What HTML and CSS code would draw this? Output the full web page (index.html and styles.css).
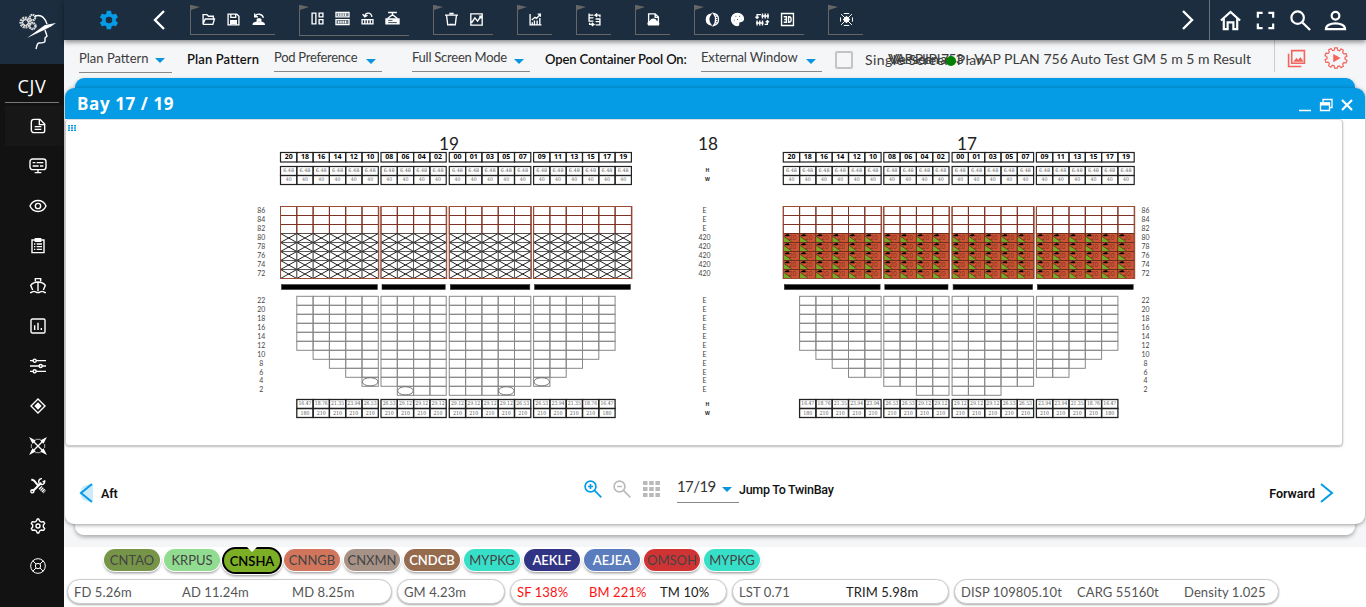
FILE: index.html
```html
<!DOCTYPE html>
<html lang="en">
<head>
<meta charset="utf-8">
<title>Bay Plan</title>
<link rel="stylesheet" href="styles.css">
</head>
<body>
<div class="app">
  <aside class="side">
    <div class="logo">
      <svg width="40" height="40" viewBox="0 0 40 40" fill="none" stroke="#fff">
        <circle cx="11.500" cy="11.500" r="4.300" stroke-width="3.600" stroke="#ccc" stroke-dasharray="1.8 .6"/><circle cx="11.500" cy="11.500" r="2.800"/>
        <circle cx="18.500" cy="6.500" r="2.700" stroke-width="2.200" stroke="#ddd" stroke-dasharray="1.6 .5"/><circle cx="18.500" cy="15" r="3" stroke-width="2.400" stroke="#ddd" stroke-dasharray="1.6 .5"/>
        <path d="M21 5c6-2 10 2 12 8M31 19l2 6-2 2v3c0 2-3 2-6 2-2 0-2 3-3 6" stroke-width="1.400"/>
        <path d="M13 27L31 14l11-2-5 3.500-8 4z" fill="#fff" stroke="none"/>
      </svg>
    </div>
    <div class="code">CJV</div>
    <nav class="menu">
      <a class="on"><svg viewBox="0 0 24 24"><path d="M6 2h9l7 7v10a3 3 0 0 1-3 3H6a4 4 0 0 1-4-4V6a4 4 0 0 1 4-4zM14 2v8h8M7 13h10M7 17h10"/></svg></a>
      <a><svg viewBox="0 0 24 24"><rect x="0" y="1.500" width="24" height="16" rx="4"/><path d="M4 7h4M10 7h10M4 12h9M15 12h5M12 18v4M7 22h10"/></svg></a>
      <a><svg viewBox="0 0 24 24"><path d="M0 12C5 1 19 1 24 12 19 23 5 23 0 12z"/><circle cx="12" cy="12" r="4"/></svg></a>
      <a><svg viewBox="0 0 24 24"><path d="M3 3h18v19H3zM8 1h8v4H8zM6 9h2M10 9h8M6 13h2M10 13h8M6 17h2M10 17h8"/></svg></a>
      <a><svg viewBox="0 0 24 24"><path d="M8 5V1h8v4M4 18L1 11C4 7 8 6 12 6s8 1 11 5l-3 7M12 6v14M0 22c3 0 4-2 6-2s3 2 6 2 4-2 6-2 3 2 6 2"/></svg></a>
      <a><svg viewBox="0 0 24 24"><rect x="1.500" y="1.500" width="21" height="21" rx="2"/><path d="M7 11v7M12 7v11M17 15v3"/></svg></a>
      <a><svg viewBox="0 0 24 24"><path d="M0 4h5M9 4h15M0 12h14M18 12h6M0 20h5M9 20h15"/><circle cx="7" cy="4" r="2.300"/><circle cx="16" cy="12" r="2.300"/><circle cx="7" cy="20" r="2.300"/></svg></a>
      <a><svg viewBox="0 0 24 24"><path d="M12 1.500L22.500 12 12 22.500 1.500 12z"/><path d="M12 8l4 4-4 4-4-4z" fill="#fff"/></svg></a>
      <a><svg viewBox="0 0 24 24"><path d="M3 3l18 18M21 3L3 21"/><path d="M1 1l6 3-3 3zM23 1l-6 3 3 3zM1 23l6-3-3-3zM23 23l-6-3 3-3z" fill="#fff"/><path d="M8 2h8M8 22h8M2 9v6M22 9v6" stroke-width="1"/></svg></a>
      <a><svg viewBox="0 0 24 24"><path d="M2 2l4 2 6 7" stroke-width="3"/><path d="M15 14l7 7" stroke-width="6" stroke-dasharray="2 1"/><path d="M4 20L17 7" stroke-width="3.200"/><circle cx="3.500" cy="20" r="2.300"/><path d="M22 5a4.500 4.500 0 1 1-4-4M23 4l-4 2"/></svg></a>
      <a><svg viewBox="0 0 24 24"><path d="M9.500 4.500L11 1.500h2l1.500 3 2.500 1.500 3.500-.5 1.500 2.500-2 2.500v3l2 2.500-1.500 2.500-3.500-.5-2.500 1.500-1.500 3h-2l-1.500-3L7 18l-3.500.5L2 16l2-2.500v-3L2 8l1.500-2.500L7 6z"/><circle cx="12" cy="12" r="3"/></svg></a>
      <a><svg viewBox="0 0 24 24" class="thin"><circle cx="12" cy="12" r="11"/><circle cx="12" cy="12" r="4"/><path d="M4 4l5 5M20 4l-5 5M4 20l5-5M20 20l-5-5"/></svg></a>
    </nav>
  </aside>
  <main class="main">
    <header class="top">
      <svg class="gear" viewBox="0 0 24 24"><path fill="#059be5" fill-rule="evenodd" d="M19.400 13c.1-.6.1-1.300 0-2l2.100-1.600c.2-.2.3-.4.100-.7l-2-3.400c-.1-.2-.4-.3-.6-.2l-2.500 1c-.5-.4-1.100-.7-1.700-1L14.400 2.400c0-.2-.2-.4-.5-.4h-4c-.2 0-.4.2-.5.400L9 5.100c-.6.2-1.200.6-1.700 1l-2.500-1c-.2-.1-.5 0-.6.200l-2 3.400c-.1.300 0 .5.100.7L4.500 11v2l-2.200 1.600c-.1.200-.2.400-.1.700l2 3.400c.1.200.4.300.6.200l2.500-1c.5.400 1.100.8 1.700 1l.4 2.700c.1.200.3.400.5.400h4c.3 0 .5-.2.500-.4l.4-2.700c.6-.2 1.200-.6 1.700-1l2.500 1c.2.100.5 0 .6-.2l2-3.400c.2-.3.1-.5-.1-.7zM12 15.600a3.600 3.600 0 1 1 0-7.200 3.600 3.600 0 0 1 0 7.200z"/></svg>
      <svg class="back" viewBox="0 0 12 20"><path d="M11 1L2 10l9 9"/></svg>
      <div class="groups">
        <div class="grp"><svg viewBox="0 0 24 24"><path d="M2 20V3h7l3 3h9v4M2 20L6 11h17l-3 10H3z"/></svg><svg viewBox="0 0 24 24"><path d="M2 2h16l4 4v16H2zM7 3v5h9V3M7 21v-7h10v7"/><path d="M7 14h10v5H7z" fill="#fff"/></svg><svg viewBox="0 0 24 24"><path d="M6 6c3-6 13-5 15 3M5 1v6h6"/><path d="M8 13c1-5 9-5 10 0l-2 3h-6zM1 22c0-6 5-4 7-7l5 2 5-2c2 3 6 1 6 7z" fill="#fff" stroke="none"/></svg></div>
        <div class="grp low"><svg viewBox="0 0 24 24"><path d="M2 2h7v20H2zM15 2h7v7h-7zM15 14h7v8h-7z"/></svg><svg viewBox="0 0 24 24"><path d="M0 1h24v8H0zM0 14h24v9H0z"/><path d="M3 5h18M3 18.500h18" stroke-width="5" stroke-dasharray="2.400 1"/></svg><svg viewBox="0 0 24 24"><path d="M7 8c1-8 12-8 13 1M3 4l4 5 5-3M2 14h20v8H2zM7 14v8M12 14v8M17 14v8"/></svg><svg viewBox="0 0 24 24"><path d="M4 1h16M12 1v5M3 12l9-7 9 7"/><path d="M0 13h24v9H0z" fill="#fff"/><path d="M4 15.500h8M4 19.500h16" stroke="#1b2d3f" stroke-width="1.500"/></svg></div>
        <div class="grp"><svg viewBox="0 0 24 24"><path d="M0 4h24M3 5l2 17h14l2-17M8 21h8M8 1h8"/></svg><svg viewBox="0 0 24 24"><path d="M1.500 1.500h21v21h-21zM3 18l6-9 5 6 6-9M17 6h3v4"/></svg></div>
        <div class="grp"><svg viewBox="0 0 24 24"><path d="M2 2v20h21M6 22v-5M10 22V14M15 22v-8M20 22V9M5 13l6-5 3 2 7-8M16 2h5v5"/></svg></div>
        <div class="grp"><svg viewBox="0 0 24 24"><path d="M2 1v14h8M2 4h8M2 9h8M14 11h8v11H14M14 16h8M13 4h9v4M17 1l-4 3 4 3M11 21H3v-3M7 18l4 3-4 3"/></svg></div>
        <div class="grp"><svg viewBox="0 0 24 24"><path d="M3 18V1.500h12l6 6V20M15 2v6h6"/><path d="M3 22c-3-4 1-5 3-7 3-5 9-4 11 0 3 1 6 3 4 7z" fill="#fff"/></svg></div>
        <div class="grp"><svg viewBox="0 0 24 24"><path d="M9 2C-2 4-2 20 9 22 4 16 4 8 9 2z" fill="#fff"/><path d="M14 1c12 2 12 20 0 22 5-6 5-16 0-22z"/><path d="M18.500 5v14" stroke-width="4" stroke-dasharray="2 2"/></svg><svg viewBox="0 0 24 24"><path fill="#fff" fill-rule="evenodd" d="M12 1C5 1 1 6 1 12s5 11 11 11c3 0 2-3 2-5 0-3 9-1 9-7C23 5 18 1 12 1zM4 11h4v4H4zM7 4h4v4H7zM14 4h4v4h-4zM17 10h4v3h-4zM8 17h4v3H8zM10 10h4v4h-4z"/></svg><svg viewBox="0 0 24 24"><path d="M12 1v9M17 1v9M22 1v9M10 5.500h14M2 14v9M7 14v9M12 14v9M0 18.500h14M9 3H2v6M-1 7l3 3 3-3M16 21h5v-7M18 17l3-3 3 3"/></svg><svg viewBox="0 0 24 24"><path d="M1 1h22v22H1zM5 7h5v10H5M6 12h4M14 7h1c5 0 5 10 0 10h-1z"/></svg></div>
        <div class="grp"><svg viewBox="0 0 24 24"><path d="M2 2l20 20M22 2L2 22M7 1h10M7 23h10M1 8v8M23 8v8" stroke-width="1.800"/><path d="M12 7l5 5-5 5-5-5z" fill="#fff"/></svg></div>
      </div>
      <svg class="next" viewBox="0 0 12 20"><path d="M1 1l9 9-9 9"/></svg>
      <div class="user">
        <svg viewBox="0 0 24 24"><path d="M2 12L12 3l10 9M5 10v11h4v-7h6v7h4V10"/></svg>
        <svg viewBox="0 0 24 24"><path d="M4 9V4h5M15 4h5v5M20 15v5h-5M9 20H4v-5"/></svg>
        <svg viewBox="0 0 24 24"><circle cx="9" cy="9" r="6.500"/><path d="M14 14l8 8"/></svg>
        <svg viewBox="0 0 24 24"><circle cx="12" cy="7" r="4"/><path d="M2 21c0-8 20-8 20 0z"/></svg>
      </div>
    </header>
    <section class="filters">
      <div class="sel s1"><span>Plan Pattern</span><i></i></div>
      <b class="f1">Plan Pattern</b>
      <div class="sel s2"><span>Pod Preference</span><i></i></div>
      <div class="sel s3"><span>Full Screen Mode</span><i></i></div>
      <b class="f2">Open Container Pool On:</b>
      <div class="sel s4"><span>External Window</span><i></i></div>
      <div class="box"></div>
      <div class="plan"><span class="single">Single Screen Plan</span><span class="over">VesselPlan</span><span class="result"><span class="tight">VAP Plan 753 </span>- VAP PLAN 756 Auto Test GM 5 m 5 m Result</span><em></em></div>
      <div class="acts">
        <svg width="19" height="19" viewBox="0 0 24 24"><path d="M6 2h16v16H6zM2 6v16h16"/><path d="M8 16l4-5 2 3 3-4 4 6z" fill="#f4645c" stroke="none"/></svg>
        <svg width="22" height="22" viewBox="0 0 24 24"><path stroke-width="1.300" d="M10 3.500L10.500 1h3l.5 2.500 2 .6L17.500 2l2.500 1.500-.7 2.700 1.200 1.300 2.500-.2 1 2.700-2.200 1.400v1.700l2.200 1.500-1 2.600-2.600-.2-1.100 1.500.7 2.500-2.500 1.500-1.800-1.900-1.700.5L13.500 23h-3l-.5-2.500-2-.6L6.500 22 4 20.500l.7-2.700-1.200-1.300-2.500.2-1-2.700 2.200-1.400v-1.700L0 9.400l1-2.600 2.600.2 1.100-1.500L4 3l2.500-1.300L8.300 4z"/><path d="M9 7.500l8 4.500-8 4.500z" fill="#f4645c" stroke="none"/></svg>
      </div>
    </section>
    <section class="stage">
      <div class="behind"></div>
      <div class="win">
        <div class="title"><span>Bay 17 / 19</span>
          <div class="ctl"><svg viewBox="0 0 14 14"><path d="M1 12.500h12"/></svg><svg viewBox="0 0 14 14"><path d="M4 4V1.500h9v8h-2.500M1.500 5h9v7.500h-9z" stroke-width="1.300"/><path d="M1 4.500h10v3H1z" fill="#fff" stroke="none"/></svg><svg viewBox="0 0 14 14"><path d="M2 2l10 10M12 2L2 12" stroke-width="2.200"/></svg></div>
        </div>
        <div class="panel">
          <svg class="grip" width="8" height="6" viewBox="0 0 8 6"><path d="M1 0v6M4 0v6M7 0v6" stroke="#059be5" stroke-width="2" stroke-dasharray="1.500 .7"/></svg>
          <svg id="bay" width="1276" height="326" viewBox="66 120 1276 326"></svg>
        </div>
        <div class="foot">
          <div class="aft"><svg width="14" height="20" viewBox="0 0 14 20"><path d="M13 1L2 10l11 9"/></svg>Aft</div>
          <div class="tools">
            <svg width="20" height="20" viewBox="0 0 24 24" stroke="#059be5"><circle cx="9" cy="9" r="6.500"/><path d="M14 14l8 8M6 9h6M9 6v6"/></svg>
            <svg width="20" height="20" viewBox="0 0 24 24" stroke="#bbb"><circle cx="9" cy="9" r="6.500"/><path d="M14 14l8 8M6 9h6"/></svg>
            <svg width="17" height="16" viewBox="0 0 17 16" stroke="#b9b9b9"><path d="M0 2h17M0 8h17M0 14h17" stroke-width="4" stroke-dasharray="4.500 1.700"/></svg>
            <div class="jump"><span>17/19</span><i></i></div>
            <strong>Jump To TwinBay</strong>
          </div>
          <div class="fwd">Forward<svg width="14" height="20" viewBox="0 0 14 20"><path d="M1 1l11 9-11 9"/></svg></div>
        </div>
      </div>
    </section>
    <footer class="bottom">
      <div class="ports">
        <span class="olive">CNTAO</span><span class="mint">KRPUS</span><span class="active">CNSHA</span><span class="coral">CNNGB</span><span class="taupe">CNXMN</span><span class="brown lit">CNDCB</span><span class="aqua">MYPKG</span><span class="navy lit">AEKLF</span><span class="steel lit">AEJEA</span><span class="red">OMSOH</span><span class="aqua">MYPKG</span>
      </div>
      <div class="stats">
        <div class="w325"><span class="c108">FD 5.26m</span><span class="c110">AD 11.24m</span><span>MD 8.25m</span></div>
        <div class="w108"><span>GM 4.23m</span></div>
        <div class="w217"><span class="c72 bad">SF 138%</span><span class="c71 bad">BM 221%</span><span class="dark">TM 10%</span></div>
        <div class="w217"><span class="c107">LST 0.71</span><span class="dark">TRIM 5.98m</span></div>
        <div class="w325"><span class="c116">DISP 109805.10t</span><span class="c107">CARG 55160t</span><span>Density 1.025</span></div>
      </div>
    </footer>
  </main>
</div>
<script src="bay.js"></script>
</body>
</html>
```
FILE: styles.css
```css
* { box-sizing: border-box; }
body { margin: 0; font-family: Lato, "Open Sans", sans-serif; color: #3c3c3c; background: #fff; }
svg { display: block; flex: none; fill: none; }
.app { display: flex; width: 1366px; height: 607px; overflow: hidden; }
.side { width: 64px; background: #121212; flex: none; }
.logo { height: 64px; background: #1b2d3f; padding: 11px 0 0 14px; }
.logo svg { overflow: visible; }
.code { margin: 0 5px; height: 39px; border-bottom: 1px solid #777; color: #fff; font: 500 18px/44px "Open Sans", sans-serif; text-align: center; letter-spacing: .7px; }
.menu { padding-top: 3px; }
.menu a { display: flex; height: 40px; align-items: center; padding: 0 0 1px 25px; margin: 0 0 0 5px; }
.menu .on { background: #171717; }
.menu svg { width: 16px; height: 16px; stroke: #fff; stroke-width: 2.100; overflow: visible; }
.menu .thin { stroke-width: 1.500; }
.main { width: 1302px; display: flex; flex-direction: column; background: #f5f6f8; }
.top { height: 40px; background: #1b2d3f; display: flex; align-items: flex-start; box-shadow: 0 2px 5px #0007; position: relative; z-index: 2; flex: none; }
.gear { width: 22px; height: 22px; margin: 9px 0 0 34px; }
.back, .next { width: 12px; height: 20px; margin: 10px 0 0 33px; stroke: #fff; stroke-width: 2.400; }
.groups { display: flex; gap: 24px; margin: 5px 0 0 25px; }
.grp { display: flex; gap: 12px; height: 30px; padding: 8px 10px 0 11px; border-left: 1px solid #666; border-bottom: 1px solid #666; position: relative; }
.grp.low { height: 31px; padding-top: 7px; }
.grp::before { content: ""; position: absolute; left: 0; top: 0; border-left: 9px solid #666; border-top: 2px solid transparent; border-bottom: 3px solid transparent; }
.grp svg { width: 13px; height: 13px; stroke: #fff; stroke-width: 2.500; overflow: visible; }
.next { margin-left: 319px; }
.user { margin-left: 15px; height: 40px; border-left: 1px solid #667380; display: flex; align-items: center; gap: 12px; padding-left: 9px; }
.user svg { width: 23px; height: 23px; stroke: #fff; stroke-width: 2.300; }
.filters { height: 38px; display: flex; flex: none; align-items: flex-start; padding-left: 15px; font-size: 13px; }
.sel { height: 33px; border-bottom: 1px solid #888; padding-top: 11px; line-height: 15px; display: flex; justify-content: space-between; white-space: nowrap; }
.sel i, .jump i { border: 5px solid transparent; border-top-color: #0a93df; border-bottom: 0; margin: 7px 7px 0 0; height: 5px; }
.s1 { width: 93px; } .s2 { width: 108px; height: 32px; margin-left: 15px; padding-top: 10px; letter-spacing: -.28px; } .s3 { width: 118px; height: 32px; margin-left: 30px; padding-top: 10px; letter-spacing: -.25px; } .s4 { width: 121px; height: 32px; margin-left: 14px; padding-top: 10px; letter-spacing: -.15px; }
.s2 i, .s3 i, .s4 i { margin-top: 9px; margin-right: 6px; }
.filters b { line-height: 15px; margin-top: 12px; font-weight: 600; color: #111; white-space: nowrap; }
.f1 { width: 72px; margin-left: 15px; letter-spacing: .12px; } .f2 { width: 142px; margin-left: 15px; letter-spacing: -.12px; }
.box { width: 18px; height: 18px; border: 2px solid #c4c4c4; border-radius: 2px; margin: 11px 0 0 13px; }
.plan { position: relative; width: 409px; height: 38px; margin-left: 12px; white-space: nowrap; font-size: 14px; line-height: 18px; padding-top: 11px; }
.single { letter-spacing: .45px; }
.result { position: absolute; right: 23px; top: 10px; }
.tight { letter-spacing: -.75px; }
.over { position: absolute; left: 25px; top: 10px; }
.plan em { position: absolute; left: 81px; top: 16px; width: 10px; height: 10px; border-radius: 5px; background: #008000; }
.acts { height: 32px; border-left: 1px solid #ccc; display: flex; gap: 19px; padding: 7px 0 0 12px; }
.acts svg { stroke: #f4645c; stroke-width: 2; overflow: visible; }
.acts svg:first-child { margin-top: 2px; }
.stage { height: 469px; position: relative; padding: 10px 1px 0; flex: none; }
.behind { position: absolute; left: 11px; right: 11px; top: 0; height: 457px; border-radius: 9px; background: linear-gradient(#059be5 41px, #fff 41px); box-shadow: 0 2px 4px #0005; }
.win { position: relative; height: 436px; border-radius: 9px; background: #fff; box-shadow: 0 1px 4px #0006; overflow: visible; }
.title { height: 31px; background: #059be5; border-radius: 9px 9px 0 0; color: #fff; display: flex; justify-content: space-between; padding: 0 11px 0 12px; font: 700 17px/32px "Open Sans", sans-serif; letter-spacing: .6px; }
.ctl { display: flex; gap: 7px; padding-top: 10px; }
.ctl svg { width: 14px; height: 14px; stroke: #fff; stroke-width: 1.500; }
.panel { position: relative; width: 1278px; height: 327px; border: 1px solid #ccc; border-top-color: #ddd; border-radius: 4px; box-shadow: 0 1px 2px #0004; }
.grip { position: absolute; left: 2px; top: 5px; }
.foot { display: flex; position: relative; height: 76px; justify-content: space-between; padding: 0 31px 0 14px; font: 500 12.500px/15px Roboto, sans-serif; color: #111; }
.aft, .fwd { display: flex; gap: 8px; align-items: center; height: 20px; margin-top: 37px; font-weight: 600; letter-spacing: -.1px; }
.aft svg, .fwd svg { stroke: #059be5; stroke-width: 2; }
.aft svg { background: radial-gradient(circle at 70% 50%, #cceafa 60%, transparent 62%); }
.fwd { gap: 5px; letter-spacing: 0; }
.tools { position: absolute; left: 518px; top: 30px; display: flex; align-items: center; height: 26px; }
.tools svg { stroke-width: 2; margin-right: 9px; }
.tools svg:nth-child(3) { margin: 0 17px 0 2px; }
.jump { width: 62px; height: 27px; border-bottom: 1px solid #888; display: flex; justify-content: space-between; font: 15px/21px Lato, sans-serif; letter-spacing: -.6px; color: #333; }
.jump i { margin: 11px 7px 0 0; }
.tools strong { font-weight: 500; letter-spacing: -.28px; }
.bottom { height: 60px; background: #fff; }
.ports { display: flex; height: 30px; gap: 4px; padding: 2px 0 0 40px; }
.ports span { width: 56px; height: 22px; border-radius: 12px; line-height: 23px; text-align: center; font-size: 13px; color: #444; box-shadow: 0 0 0 1px #fff, 0 2px 3px #0007; }
.olive { background: #769549; } .mint { background: #91dc91; } .coral { background: #d1765d; } .taupe { background: #a79287; } .brown { background: #966a4c; } .aqua { background: #37dfc9; } .navy { background: #313384; } .steel { background: #5b7dbd; } .red { background: #d03334; }
.ports .lit { color: #fff; font-weight: 600; }
.ports .active { position: relative; width: 60px; height: 27px; margin: -2px -2px 0; border: 2px solid #000; border-radius: 14px; background: #7caf26; color: #000; font-weight: 600; line-height: 25px; }
.active::before { content: ""; position: absolute; left: 23px; top: -2px; border: 5px solid transparent; border-top-color: #fff; border-bottom: 0; }
.stats { display: flex; gap: 5px; padding: 2px 0 0 3px; }
.stats div { height: 25px; border: 1px solid #ccc; border-radius: 13px; background: #fff; box-shadow: 0 1px 2px #0005; padding: 0 7px 0 6px; line-height: 25px; font-size: 13px; letter-spacing: .1px; color: #555; display: flex; white-space: nowrap; }
.w325 { width: 325px; } .w108 { width: 108px; } .w217 { width: 217px; }
.c108 { width: 108px; } .c110 { width: 110px; } .c72 { width: 72px; } .c71 { width: 71px; } .c116 { width: 116px; } .c107 { width: 107px; }
.bad { color: #f11; } .dark { color: #222; }
```
FILE: bay.js
```js
const groups = [[280.5, ['20','18','16','14','12','10']], [381, ['08','06','04','02']], [449.3, ['00','01','03','05','07']], [533.6, ['09','11','13','15','17','19']]];
const CW = 16.3, RH = 9;
const out = [];
const line = (x1, y1, x2, y2, c, w = 1) => out.push(`<path d="M${x1} ${y1}L${x2} ${y2}" stroke="${c}" stroke-width="${w}"/>`);
const rect = (x, y, w, h, c, f = 'none', s = 1) => out.push(`<rect x="${x}" y="${y}" width="${w}" height="${h}" stroke="${c}" fill="${f}" stroke-width="${s}"/>`);
const text = (x, y, t, size, c = '#333', o = {}) => out.push(`<text x="${x}" y="${y}" font-size="${size}" fill="${c}" stroke="none" text-anchor="middle" font-family="${o.f || 'Open Sans'}" ${o.b ? 'font-weight="700"' : ''} ${o.l ? `textLength="${o.l}" lengthAdjust="spacingAndGlyphs"` : ''}>${t}</text>`);

function drawBay(dx, depths, ellipses, weights, loaded) {
  let col = 0;
  groups.forEach(([gx, names]) => {
    const start = gx + dx;
    names.forEach((name, i) => {
      const x = start + i * CW, m = x + CW / 2;
      rect(x, 152.5, CW, 9.5, '#222', 'none', 1.2);
      text(m, 159.2, name, 6.8, '#000', { b: 1, l: 8 });
      rect(x, 166.5, CW, 9, '#222', 'none', 1.2);
      rect(x, 175.500, CW, 9, '#222', 'none', 1.2);
      text(m, 172.300, '6.48', 5, '#666', { l: 11, f: 'DejaVu Serif' });
      text(m, 181.300, '40', 5, '#666', { l: 6, f: 'DejaVu Serif' });
      for (let r = 0; r < 8; r++) {
        const y = 206.5 + r * RH;
        if (r < 3) rect(x, y, CW, RH, '#7d3222');
        else if (loaded) {
          rect(x, y, CW, RH, '#6a2c1c', '#cb5435', .9);
          out.push(`<path d="M${x + .5} ${y + 3}l8 5.500h-8z" fill="#76ac25"/><path d="M${x + 1} ${y + 2}l2.500-1.200h2l1 2h-4z" fill="#000"/>`);
          line(x, y + 2.500, x + 9, y + RH, '#40351a', .7);
          text(m + 1, y + 6.300, '20', 7, '#7d2d1d', { l: 7.500 });
        } else {
          rect(x, y, CW, RH, '#555', 'none', .8);
          line(x, y, x + CW, y + RH, '#222', 1);
          line(x, y + RH, x + CW, y, '#222', 1);
        }
      }
      const d = depths[col];
      for (let r = 0; r < d; r++) rect(x, 296.300 + r * RH, CW, RH, '#888');
      if (ellipses.includes(col)) out.push(`<ellipse cx="${m}" cy="${296.300 + (d - .5) * RH}" rx="7.800" ry="4.100" stroke="#777"/>`);
      if (d) {
        rect(x, 399.500, CW, 9, '#222', 'none', 1.3);
        rect(x, 408.500, CW, 9, '#222', 'none', 1.3);
        text(m, 405.400, weights[col], 5.300, '#555', { l: 13, f: 'DejaVu Serif' });
        text(m, 414.600, weights[col] === '16.47' ? '180' : '210', 5.300, '#555', { l: 9, f: 'DejaVu Serif' });
      }
      col++;
    });
    const w = names.length * CW;
    rect(start, 206.500, w + .5, 72, '#9b4a34');
    rect(start + 1, 284.600, w - 2, 4.900, '#333', '#000', .6);
  });
}
const W = { 6: '16.47', 7: '18.76', 8: '21.35', 9: '23.94', 10: '26.53', 11: '29.12', 0: '' };
const left = [0,6,7,8,9,10,10,11,11,11,11,11,11,11,10,10,9,8,7,6,0];
const right = [0,6,7,8,9,9,10,10,11,11,11,11,11,10,10,9,9,8,7,6,0];
drawBay(0, left, [5,7,13,15], left.map(d => W[d]), false);
drawBay(502.8, right, [], right.map(d => W[d]), true);
[[449, '19'], [708, '18'], [967, '17']].forEach(([x, t]) => text(x, 150, t, 17, '#222', { l: 20, f: 'Lato' }));
for (let i = 0; i < 8; i++) {
  const y = 213.200 + i * RH, t = String(86 - 2 * i);
  text(261.300, y, t, 8, '#444', { l: 8, f: 'Lato' });
  text(1145.500, y, t, 8, '#444', { l: 8, f: 'Lato' });
  text(704.500, y, i < 3 ? 'E' : '420', 8, '#444', { l: i < 3 ? 4 : 12, f: 'Lato' });
}
for (let i = 0; i < 11; i++) {
  const y = 303.200 + i * 8.920, t = String(22 - 2 * i);
  text(261.300, y, t, 8, '#444', { l: t.length * 4, f: 'Lato' });
  text(1145.500, y, t, 8, '#444', { l: t.length * 4, f: 'Lato' });
  text(704.500, y, 'E', 8, '#444', { l: 4, f: 'Lato' });
}
[[172, 'H'], [181, 'W'], [405.500, 'H'], [414.500, 'W']].forEach(([y, t]) => text(707.300, y, t, 5, '#222', { b: 1 }));
document.getElementById('bay').innerHTML = out.join('');
```
